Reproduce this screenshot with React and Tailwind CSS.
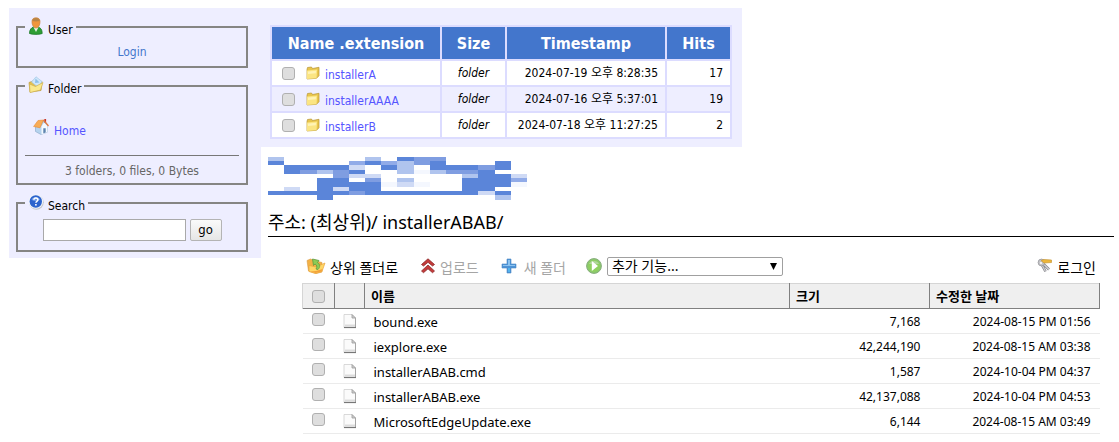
const folders = [
  { name: 'installerA', time: '2024-07-19 오후 8:28:35', hits: 17 },
  { name: 'installerAAAA', time: '2024-07-16 오후 5:37:01', hits: 19 },
  { name: 'installerB', time: '2024-07-18 오후 11:27:25', hits: 2 },
];

const files = [
  { name: 'bound.exe', size: '7,168', date: '2024-08-15 PM 01:56' },
  { name: 'iexplore.exe', size: '42,244,190', date: '2024-08-15 AM 03:38' },
  { name: 'installerABAB.cmd', size: '1,587', date: '2024-10-04 PM 04:37' },
  { name: 'installerABAB.exe', size: '42,137,088', date: '2024-10-04 PM 04:53' },
  { name: 'MicrosoftEdgeUpdate.exe', size: '6,144', date: '2024-08-15 AM 03:49' },
];

// one character per block, '.' stays empty
const mosaicRows = [
  'L.....L.DMM.....',
  'D....NDNLMD...D.',
  '.DDDDP.DL.DDDMD.',
  '.DMLMD..LFLMMD..',
  '....MPP.....LDDP',
  '...DD.M.L...DDDN',
  '...DDDDFPF..DDDF',
  '.P.DPDD.....DD..',
  'DDDDDMDDDDDDDPD.',
  '...D..........L.',
];
const mosaicX = [0, 16, 32, 49, 65, 81, 97, 113, 129, 146, 162, 178, 194, 210, 227, 243, 259];
const mosaicY = [0, 4, 8, 13, 17, 21, 25, 30, 34, 38, 43];
const mosaicColors = { D: '#5b85d9', M: '#7f9de1', N: '#91abe8', L: '#b0c4ee', P: '#cfdaf5', F: '#f4f7fe' };

function Mosaic() {
  return (
    <svg width="259" height="43" viewBox="0 0 259 43" shapeRendering="crispEdges" aria-hidden="true">
      {mosaicRows.map((row, y) =>
        row.split('').map((c, x) =>
          c === '.' ? null : (
            <rect
              key={`${x}-${y}`}
              x={mosaicX[x]}
              y={mosaicY[y]}
              width={mosaicX[x + 1] - mosaicX[x]}
              height={mosaicY[y + 1] - mosaicY[y]}
              fill={mosaicColors[c]}
            />
          )
        )
      )}
    </svg>
  );
}

function UserIcon() {
  return (
    <svg width="16" height="18" viewBox="0 0 16 18">
      <path d="M1.5 16.5c0-4 2-6 4-6.5h4.500c2.500.5 4.200 2.500 4.200 6.500-3 1.200-9.700 1.200-12.700 0z" fill="#2f9e35" stroke="#1c7a28" strokeWidth=".8" />
      <path d="M5.500 10.200 8 15l2.500-4.800z" fill="#e9f5e9" />
      <path d="M4 4.500C4 2 5.500.8 8 .8s4 1.200 4 3.700c0 3.500-1.500 6.500-4 6.500s-4-3-4-6.500z" fill="#f0963c" stroke="#c98242" strokeWidth=".7" />
      <path d="M4.300 4C4.500 2 6 1 8 1s3.500 1 3.700 3c-2 .6-5.400.6-7.400 0z" fill="#b98546" />
    </svg>
  );
}

function OpenFolderIcon() {
  return (
    <svg width="16" height="18" viewBox="0 0 16 18">
      <path d="M1 6.500 5 5l9 .5-1 9L2 16z" fill="#e6c04f" stroke="#b99a3c" strokeWidth=".7" />
      <path d="M8 .8 14 5.500l-3.500 6L3.500 6z" fill="#cfe7fa" stroke="#a3c8e6" strokeWidth=".7" />
      <path d="M7.500 2.500 11.500 6.500l-4.500.5z" fill="#8fc0ea" />
      <path d="m1.500 8 6 2.500 7.500-4-2.500 7.500L2 16.600z" fill="#fbe98d" stroke="#cdb052" strokeWidth=".7" />
    </svg>
  );
}

function HomeIcon() {
  return (
    <svg width="16" height="18" viewBox="0 0 16 18">
      <path d="M2.500 8v5.500L8 16.500l6.500-2.500V8L10.500 3z" fill="#b5d3ee" stroke="#8faccb" strokeWidth=".7" />
      <path d="M8.500 8.500v8l6-2.500V8L11 4.500z" fill="#f4f9fe" />
      <path d="M10.300 10.200h2.400v4.300l-2.400.8z" fill="#5d83ae" />
      <path d="M11.300 1h1.800v3.600h-1.800z" fill="#c8372d" />
      <path d="M.6 8.500 5 2.500 10.500 2 7 9.800z" fill="#f8ac55" stroke="#e58c38" strokeWidth=".6" />
      <path d="M10.500 2 15.500 8" stroke="#e0783c" strokeWidth="1.200" />
    </svg>
  );
}

function HelpIcon() {
  return (
    <svg width="16" height="18" viewBox="0 0 16 18">
      <circle cx="8.400" cy="9.300" r="7.400" fill="#c3c6cc" />
      <circle cx="7.800" cy="8.500" r="7.300" fill="#f0f3f9" />
      <circle cx="7.800" cy="8.500" r="6.200" fill="#2c63cd" />
      <path d="M3.500 6.500C4.500 3 11 3 12 6.500c-2 2-6.500 2-8.500 0z" fill="#6d9ae6" />
      <path d="M5.900 6.800c0-2.500 4-2.500 4 0 0 1.500-2 1.500-2 3" fill="none" stroke="#fff" strokeWidth="1.500" />
      <rect x="7.100" y="11" width="1.600" height="1.600" fill="#fff" />
    </svg>
  );
}

function FolderIcon() {
  return (
    <svg width="14" height="14" viewBox="0 0 14 14">
      <path d="M1 3.500 1.500 1.500 5.500 1l1 1.500L13 1.300v8.500l-2.500 2.500L1 13z" fill="#e8c54c" stroke="#b89538" strokeWidth=".7" />
      <path d="m1 4.500 10.200-1-.7 8.800L1 13z" fill="#fbe583" />
      <path d="m2 5.500 8-.7-.2 2.500-7.800.8z" fill="#fff3b5" />
    </svg>
  );
}

function FileIcon() {
  return (
    <svg width="14" height="16" viewBox="0 0 14 16">
      <path d="M1 1.500h8L12.500 5v9.500H1z" fill="#fbfbfb" stroke="#cfcfcf" strokeWidth=".8" />
      <path d="M9 1.500V5h3.500z" fill="#d0d0d0" stroke="#999" strokeWidth=".8" />
      <path d="M2 12.500h10" stroke="#dcdcdc" strokeWidth="2" />
      <path d="M12.500 5v9" stroke="#a5a5a5" />
      <path d="M1 14.500h12" stroke="#777" strokeWidth="1.200" />
    </svg>
  );
}

function ParentFolderIcon() {
  return (
    <svg width="20" height="16" viewBox="0 0 20 16">
      <path d="M1 2.500 4.500 1 8 2.500 16 4.500V14l-6 1.500L2.500 13z" fill="#f3b145" stroke="#d99a45" strokeWidth=".6" />
      <path d="M3 7.500 10 9l9-4-3 8.500L9.500 15.500 3 13.500z" fill="#ffd766" stroke="#eaa53f" strokeWidth=".7" />
      <path d="M4 13.500 9.500 15l6-1.500 1-2.500-6.500 2z" fill="#f3a23a" />
      <path d="M12 11.500c2.500-2.500 2-5.500-.5-7L13 2.500 6.500 1 7.500 7.500l1.500-1.500c2 1 2.300 3 1 5z" fill="#8dcb55" stroke="#5f9a40" strokeWidth=".8" />
    </svg>
  );
}

function UploadIcon() {
  return (
    <svg width="16" height="16" viewBox="0 0 16 16">
      <path d="m8 .8 6.500 5.700-2 1.500L8 4.300 3.500 8l-2-1.500z" fill="#c43a3a" stroke="#8a2929" strokeWidth=".8" />
      <path d="m8 7 6.500 6-2 1.700L8 10.800l-4.500 3.900L1.500 13z" fill="#c43a3a" stroke="#8a2929" strokeWidth=".8" />
    </svg>
  );
}

function PlusIcon() {
  return (
    <svg width="16" height="16" viewBox="0 0 16 16">
      <path d="M6 1h4v5h5v4h-5v5H6v-5H1V6h5z" fill="#4e93d6" stroke="#4a86c2" strokeWidth=".6" />
      <path d="M7 2h2v5h5v1H2V7h5z" fill="#8cc3f0" />
      <path d="M7 10h2v4H7z" fill="#53b4ee" />
    </svg>
  );
}

function PlayIcon() {
  return (
    <svg width="16" height="16" viewBox="0 0 16 16">
      <circle cx="8" cy="8" r="7.400" fill="#8cc96d" stroke="#86ad7c" />
      <circle cx="8" cy="8" r="5.800" fill="#8fd05f" />
      <path d="M3 6c1-4 9-4 10 0z" fill="#b0d79b" />
      <path d="M5.800 3v10L12 8z" fill="#fff" />
    </svg>
  );
}

function KeysIcon() {
  return (
    <svg width="16" height="16" viewBox="0 0 16 16">
      <path d="M4.500 6 8.500 13.500M7 6.500 12 11.500" stroke="#85858a" strokeWidth="2.600" />
      <path d="M4.500 6 8.500 13.500M7 6.500 12 11.500" stroke="#d2d2d6" strokeWidth="1.200" />
      <circle cx="4.500" cy="4.500" r="3.400" fill="#c4c4c8" stroke="#98989c" strokeWidth=".8" />
      <path d="M4 2.500 7 1.500l7.500.5v2.500L7 5z" fill="#eeb73a" stroke="#c79838" strokeWidth=".7" />
      <circle cx="4" cy="5" r="1" fill="#fff" />
    </svg>
  );
}

function Checkbox({ label }) {
  return (
    <input
      type="checkbox"
      aria-label={label}
      className="block h-[13px] w-[13px] shrink-0 appearance-none rounded-[3px] border border-[#b0b0b0] bg-[#dedede]"
    />
  );
}

function Panel({ icon, title, className, children }) {
  return (
    <fieldset className={`border-2 border-[#858583] px-[7px] ${className}`}>
      <legend className="flex h-5 items-start gap-1 px-[3px]">
        {icon}
        <span className="pt-1 leading-[18px] text-black">{title}</span>
      </legend>
      {children}
    </fieldset>
  );
}

function Sidebar() {
  return (
    <aside className="w-[252px] shrink-0 space-y-2 self-start bg-[#eeeeff] pt-[9px] pr-[13px] pb-1.5 pl-[7px]">
      <Panel icon={<UserIcon />} title="User" className="h-[51px]">
        <div className="pt-1.5 text-center leading-[18px]">
          <a href="#login" className="text-[#4376cc]">Login</a>
        </div>
      </Panel>
      <Panel icon={<OpenFolderIcon />} title="Folder" className="h-[109px]">
        <a href="#home" className="mt-[22px] ml-2 flex items-start gap-[5px] text-[#5555ff]">
          <HomeIcon />
          <span className="pt-1 leading-[18px]">Home</span>
        </a>
        <div className="mt-[15px] border-t border-[#777] pt-1.5 text-center leading-[18px] text-[#666]">
          3 folders, 0 files, 0 Bytes
        </div>
      </Panel>
      <Panel icon={<HelpIcon />} title="Search" className="h-[59px]">
        <form className="flex justify-center gap-1 pt-1.5" onSubmit={(e) => e.preventDefault()}>
          <input type="text" aria-label="Search" className="h-[22px] w-[143px] border border-[#a9a9a9] bg-white px-1" />
          <button className="h-[22px] w-8 rounded-[2px] border border-[#b4b4b4] bg-linear-to-b from-[#fafafa] to-[#e6e6e6] text-[13px] leading-[18px] text-black">
            go
          </button>
        </form>
      </Panel>
    </aside>
  );
}

function FolderTable() {
  return (
    <table className="w-[462px] table-fixed border-separate border-spacing-[2px] bg-[#dcdcff] text-black">
      <thead>
        <tr className="h-8 bg-[#4376cc] text-base text-white">
          <th className="w-[168px] p-0 pt-0.5 font-bold">Name .extension</th>
          <th className="w-[63px] p-0 pt-0.5 font-bold">Size</th>
          <th className="p-0 pt-0.5 font-bold">Timestamp</th>
          <th className="w-[63px] p-0 pt-0.5 font-bold">Hits</th>
        </tr>
      </thead>
      <tbody>
        {folders.map((f) => (
          <tr key={f.name} className="h-6 bg-white even:bg-[#eeeeff]">
            <td className="p-0">
              <div className="flex h-6 items-center pl-[10px]">
                <Checkbox label={f.name} />
                <a href="#folder" className="ml-[11px] flex items-center gap-[5px] text-[#5555ff]">
                  <FolderIcon />
                  <span className="pt-1 leading-5">{f.name}</span>
                </a>
              </div>
            </td>
            <td className="p-0 text-center italic">folder</td>
            <td className="p-0 pr-[7px] text-right">{f.time}</td>
            <td className="p-0 pr-[7px] text-right">{f.hits}</td>
          </tr>
        ))}
      </tbody>
    </table>
  );
}

function Toolbar() {
  return (
    <div className="flex h-[26px] items-center pr-1 pl-1 text-sm text-black">
      <a href="#up" className="flex items-center gap-1">
        <ParentFolderIcon />
        <span className="pt-1">상위 폴더로</span>
      </a>
      <button className="ml-[22px] flex items-center gap-1 text-[#a5a5a5]" disabled>
        <UploadIcon />
        <span className="pt-1">업로드</span>
      </button>
      <button className="ml-[22px] flex items-center gap-[7px] text-[#a5a5a5]" disabled>
        <PlusIcon />
        <span className="pt-1">새 폴더</span>
      </button>
      <label htmlFor="extra" aria-label="추가 기능" className="ml-5">
        <PlayIcon />
      </label>
      <div className="relative ml-[5px]">
        <select id="extra" className="block h-[19px] w-[176px] appearance-none rounded-[2px] border border-[#a0a0a0] bg-white pl-1 leading-4">
          <option>추가 기능...</option>
        </select>
        <svg className="pointer-events-none absolute top-[6px] right-[6px]" width="7" height="7" viewBox="0 0 7 7">
          <path d="M0 0h7L3.500 7z" fill="#000" />
        </svg>
      </div>
      <a href="#signin" className="ml-auto flex items-center gap-1">
        <KeysIcon />
        <span className="pt-1">로그인</span>
      </a>
    </div>
  );
}

function FileTable() {
  return (
    <table className="w-full table-fixed border-collapse text-xs text-black">
      <thead>
        <tr className="h-[25px] border-t border-b border-t-[#d5d5d5] border-b-[#808080] bg-[#efefef] text-left">
          <th className="w-8 border-r border-l border-r-[#808080] border-l-[#d5d5d5] p-0 pl-[9px]">
            <Checkbox label="전체 선택" />
          </th>
          <th className="w-[30px] border-r border-[#808080] p-0" />
          <th className="border-r border-[#808080] p-0 pl-1.5 text-[13px] leading-5 font-bold">이름</th>
          <th className="w-[140px] border-r border-[#808080] p-0 pl-1.5 text-[13px] leading-5 font-bold">크기</th>
          <th className="w-[170px] border-r border-[#808080] p-0 pl-1.5 text-[13px] leading-5 font-bold">수정한 날짜</th>
        </tr>
      </thead>
      <tbody>
        {files.map((f) => (
          <tr key={f.name} className="h-[25px] border-b border-[#ebebeb]">
            <td className="p-0 pb-1 pl-[9px]">
              <Checkbox label={f.name} />
            </td>
            <td className="p-0 pl-2">
              <FileIcon />
            </td>
            <td className="p-0 pt-0.5 pl-[9px] text-[13px] leading-5">{f.name}</td>
            <td className="p-0 pt-0.5 pr-[9px] text-right">{f.size}</td>
            <td className="p-0 pt-0.5 pr-[9px] text-right">{f.date}</td>
          </tr>
        ))}
      </tbody>
    </table>
  );
}

export default function App() {
  return (
    <div className="flex pt-2 pl-[9px] font-['DejaVu_Sans_Condensed','Noto_Sans','Noto_Sans_CJK_KR',sans-serif] text-xs">
      <Sidebar />
      <main className="min-w-0 flex-1">
        <section className="w-[481px] bg-[#eeeeff] pt-[17px] pb-2 pl-[9px]">
          <FolderTable />
        </section>
        <section className="pr-[5px] pl-[7px] font-['Noto_Sans','Noto_Sans_CJK_KR',sans-serif]">
          <div className="pt-2.5">
            <Mosaic />
          </div>
          <h1 className="mt-2.5 border-b border-black pb-0.5 text-lg leading-6 text-black">
            주소: (최상위)/ installerABAB/
          </h1>
          <div className="mt-4 mr-[14px] ml-[34px]">
            <Toolbar />
            <div className="mt-1">
              <FileTable />
            </div>
          </div>
        </section>
      </main>
    </div>
  );
}
